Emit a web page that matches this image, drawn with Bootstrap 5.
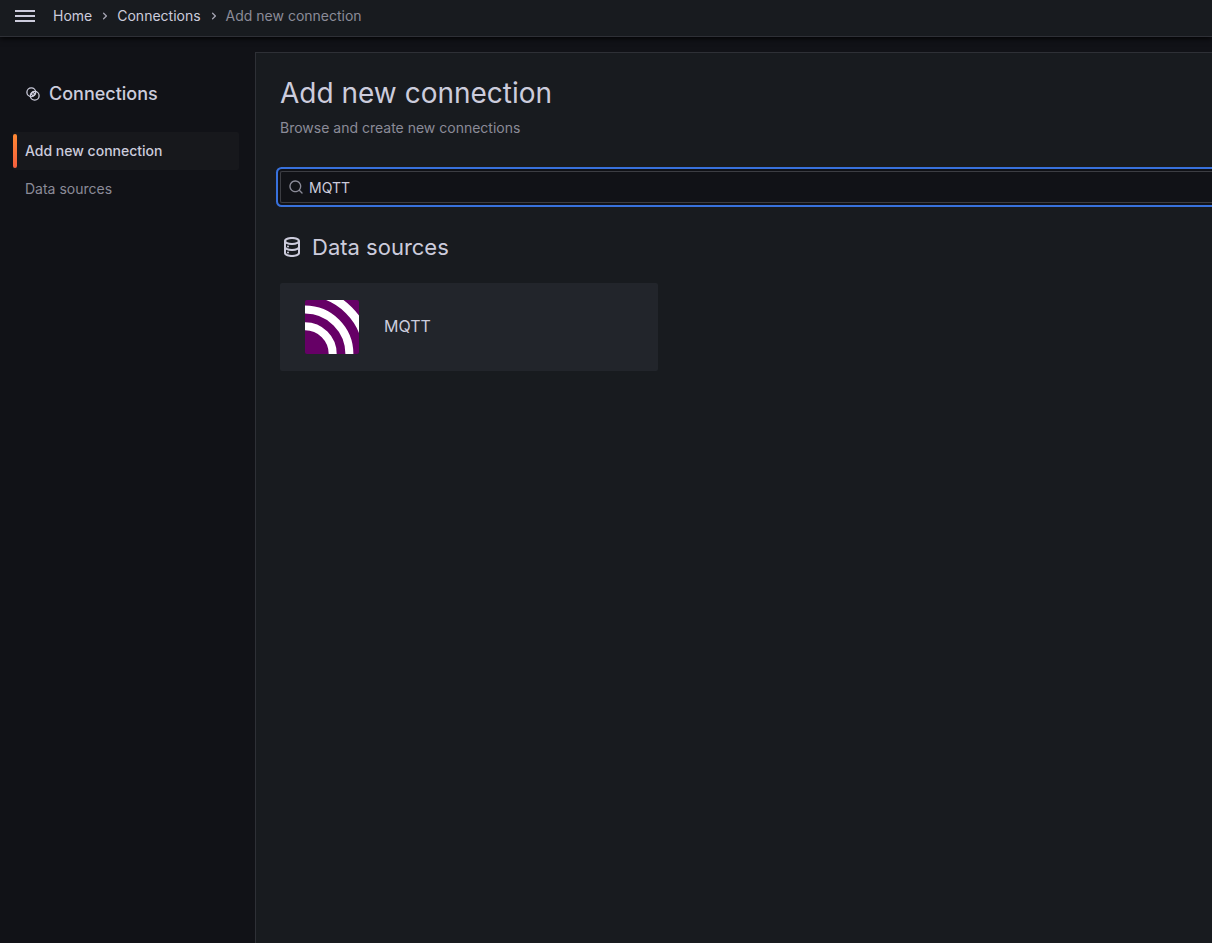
<!DOCTYPE html>
<html lang="en" data-bs-theme="dark">
<head>
<meta charset="utf-8">
<meta name="viewport" content="width=device-width, initial-scale=1">
<title>Add new connection - Connections</title>
<link rel="stylesheet" href="https://cdn.jsdelivr.net/npm/bootstrap@5.3.0/dist/css/bootstrap.min.css">
<style>
:root { --canvas: #111217; --panel: #181b1f; --raised: #22252b; --line: #2e3036; --ink: #ccccdc; --ink-soft: #8b8b98; }
body { background: var(--canvas); color: var(--ink); font-family: Inter, "Liberation Sans", sans-serif; font-size: 14px; line-height: 22px; }
a { color: inherit; text-decoration: none; }
h1, h2, h3, p { color: inherit; margin: 0; }
svg { display: block; flex: none; fill: currentColor; }
.soft { color: var(--ink-soft); }
.topbar { height: 37px; padding: 0 13px 4px; background: var(--panel); border-bottom: 1px solid var(--line); box-shadow: 0 1px 6px #000; position: relative; z-index: 1; }
.menu-btn { background: none; border: 0; padding: 0; color: inherit; }
.crumbs { margin-left: 16px; }
.crumb-gap { padding: 0 4px 0 5px; color: #a3a3b0; }
.side { width: 255px; padding: 45px 16px 0 13px; }
.side-title { font-size: 18px; font-weight: 500; line-height: 24px; padding-left: 12px; margin-bottom: 26px; }
.side .nav-link { color: var(--ink-soft); padding: 8px 12px; border-radius: 2px; position: relative; }
.side .nav-link.active { color: var(--ink); background: #17181c; font-weight: 500; }
.side .nav-link.active::before { content: ""; position: absolute; left: 0; top: 2px; bottom: 2px; width: 4px; border-radius: 2px; background: linear-gradient(#ff8833, #f55f3e); }
.main-pane { background: var(--panel); border: solid var(--line); border-width: 1px 0 0 1px; margin-top: 15px; padding: 24px 0 24px 24px; }
.main-pane h1 { font-size: 28px; font-weight: 400; line-height: 32px; }
.main-pane h2 { font-size: 22px; font-weight: 400; line-height: 24px; }
.search-box { height: 32px; margin: 32px 0; padding: 0 7px; gap: 5px; background: var(--canvas); border: 1px solid #3c3d43; border-right: 0; border-radius: 2px 0 0 2px; box-shadow: 0 0 0 2px var(--canvas), 0 0 0 4px #3871dc; }
.search-box input, .search-box input:focus { background: none; border: 0; padding: 2px 0 0; outline: 0; box-shadow: none; color: var(--ink); font-size: 14px; line-height: 22px; min-height: 0; }
.source-card { width: 378px; height: 88px; padding: 0 24px; gap: 25px; background: var(--raised); border-radius: 2px; font-size: 16px; margin-top: 24px; }
.source-name { padding-bottom: 2px; }
</style>
</head>
<body>
<div class="d-flex flex-column min-vh-100 overflow-hidden">
  <header class="topbar d-flex align-items-center">
    <button class="menu-btn" type="button" aria-label="Toggle menu">
      <svg width="24" height="24" viewBox="0 0 24 24" aria-hidden="true"><path d="M2 6h20v2H2zM2 11h20v2H2zM2 16h20v2H2z"/></svg>
    </button>
    <nav aria-label="Breadcrumbs" class="crumbs">
      <ol class="list-unstyled d-flex align-items-center mb-0">
        <li><a href="#">Home</a></li>
        <li class="crumb-gap" aria-hidden="true"><svg width="16" height="16" viewBox="0 0 24 24"><path d="M14.83,11.29,10.59,7.05a1,1,0,0,0-1.42,0,1,1,0,0,0,0,1.41L12.71,12,9.17,15.54a1,1,0,0,0,0,1.41,1,1,0,0,0,.71.29,1,1,0,0,0,.71-.29l4.24-4.24A1,1,0,0,0,14.83,11.29Z"/></svg></li>
        <li><a href="#">Connections</a></li>
        <li class="crumb-gap" aria-hidden="true"><svg width="16" height="16" viewBox="0 0 24 24"><path d="M14.83,11.29,10.59,7.05a1,1,0,0,0-1.42,0,1,1,0,0,0,0,1.41L12.71,12,9.17,15.54a1,1,0,0,0,0,1.41,1,1,0,0,0,.71.29,1,1,0,0,0,.71-.29l4.24-4.24A1,1,0,0,0,14.83,11.29Z"/></svg></li>
        <li class="soft" aria-current="page">Add new connection</li>
      </ol>
    </nav>
  </header>
  <div class="d-flex flex-grow-1">
    <aside class="side flex-shrink-0">
      <h2 class="side-title d-flex align-items-center gap-2">
        <svg width="16" height="16" viewBox="0 0 16 16" aria-hidden="true"><g fill="none" stroke="currentColor" stroke-width="1.3"><circle cx="6.3" cy="6.2" r="4.4"/><circle cx="9.7" cy="9.8" r="4.4"/><path d="M8 6.1 9.9 8 8 9.9 6.1 8z" stroke-linejoin="round"/></g></svg>
        Connections
      </h2>
      <nav class="nav flex-column" aria-label="Connections">
        <a class="nav-link active" aria-current="page" href="#">Add new connection</a>
        <a class="nav-link" href="#">Data sources</a>
      </nav>
    </aside>
    <main class="main-pane flex-grow-1">
      <h1>Add new connection</h1>
      <p class="soft mt-2">Browse and create new connections</p>
      <div class="search-box d-flex align-items-center">
        <svg class="soft" width="16" height="16" viewBox="0 0 24 24" aria-hidden="true"><path d="M21.71,20.29,18,16.61A9,9,0,1,0,16.61,18l3.68,3.68a1,1,0,0,0,1.42,0A1,1,0,0,0,21.71,20.29ZM11,18a7,7,0,1,1,7-7A7,7,0,0,1,11,18Z"/></svg>
        <input class="form-control" type="text" value="MQTT" aria-label="Search all">
      </div>
      <h2 class="d-flex align-items-center gap-2">
        <svg width="24" height="24" viewBox="0 0 24 24" aria-hidden="true"><path d="M8,16.5a1,1,0,1,0,1,1A1,1,0,0,0,8,16.5ZM12,2C8,2,4,3.37,4,6V18c0,2.63,4,4,8,4s8-1.37,8-4V6C20,3.37,16,2,12,2Zm6,16c0,.71-2.28,2-6,2s-6-1.29-6-2V14.73A13.16,13.16,0,0,0,12,16a13.16,13.16,0,0,0,6-1.27Zm0-6c0,.71-2.28,2-6,2s-6-1.29-6-2V8.73A13.16,13.16,0,0,0,12,10a13.16,13.16,0,0,0,6-1.27ZM12,8C8.28,8,6,6.71,6,6s2.28-2,6-2,6,1.29,6,2S15.72,8,12,8ZM8,10.5a1,1,0,1,0,1,1A1,1,0,0,0,8,10.5Z"/></svg>
        Data sources
      </h2>
      <a class="source-card d-flex align-items-center" href="#">
        <svg width="55" height="54" viewBox="-1 0 55 54" aria-hidden="true"><defs><clipPath id="tile"><rect width="54" height="54" rx="2"/></clipPath></defs><g clip-path="url(#tile)"><path fill="#660066" d="M0 0h54v54H0z"/><g fill="none" stroke="#fff" stroke-width="8"><circle cx="0" cy="54" r="27.7"/><circle cx="0" cy="54" r="44.4"/><circle cx="0" cy="54" r="62" stroke-width="8.4"/></g></g></svg>
        <span class="source-name">MQTT</span>
      </a>
    </main>
  </div>
</div>
<script src="https://cdn.jsdelivr.net/npm/bootstrap@5.3.0/dist/js/bootstrap.bundle.min.js"></script>
</body>
</html>
